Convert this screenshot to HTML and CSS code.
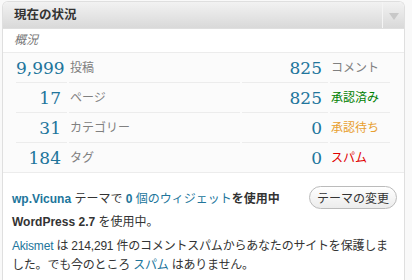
FILE: index.html
```html
<!DOCTYPE html>
<html lang="ja">
<head>
    <meta charset="UTF-8">
    <title>現在の状況</title>
    <link rel="stylesheet" href="styles.css">
</head>
<body>
    <div class="postbox">
        <div class="handle">
            <h3>現在の状況</h3>
            <div class="toggle"><span class="arrow"></span></div>
        </div>
        <p class="sub">概況</p>
        <div class="table">
            <div class="num first">9,999</div>
            <div class="label first">投稿</div>
            <div class="num first">825</div>
            <div class="label first">コメント</div>

            <div class="num">17</div>
            <div class="label">ページ</div>
            <div class="num">825</div>
            <div class="label approved">承認済み</div>

            <div class="num">31</div>
            <div class="label">カテゴリー</div>
            <div class="num">0</div>
            <div class="label waiting">承認待ち</div>

            <div class="num last">184</div>
            <div class="label last">タグ</div>
            <div class="num last">0</div>
            <div class="label last spam">スパム</div>
        </div>
        <div class="versions">
            <div class="theme-row">
                <p><a class="b" href="#">wp.Vicuna</a> テーマで <a class="b" href="#">0</a> <a href="#">個のウィジェット</a><span class="b">を使用中</span></p>
                <button class="button">テーマの変更</button>
            </div>
            <p class="wpver"><span class="b">WordPress 2.7</span> を使用中。</p>
            <p class="akismet"><a href="#">Akismet</a> は 214,291 件のコメントスパムからあなたのサイトを保護しました。でも今のところ <a href="#">スパム</a> はありません。</p>
            <div class="foot"></div>
        </div>
    </div>
</body>
</html>
```

FILE: styles.css
```css
body {
    margin: 0;
    padding: 0;
    background-color: #f9f9f9;
    font-family: "Liberation Sans", "Noto Sans CJK JP", sans-serif;
    font-size: 12px;
    color: #333;
}

a {
    color: #21759b;
    text-decoration: none;
}

.b {
    font-weight: bold;
}

.postbox {
    margin: 1px 0 0 2px;
    width: 401px;
    height: 290px;
    background-color: #fff;
    border: 1px solid #dfdfdf;
    border-bottom: none;
    border-radius: 6px 6px 0 0;
    overflow: hidden;
}

.handle {
    display: flex;
    height: 26px;
    background: linear-gradient(#f2f2f2, #d9d9d9);
    border-bottom: 1px solid #dfdfdf;
}

.handle h3 {
    flex: 1;
    margin: 0;
    padding-left: 11px;
    font-size: 12.5px;
    line-height: 26px;
    color: #333;
}

.toggle {
    width: 22px;
    border-left: 1px solid #f4f4f4;
    display: flex;
    justify-content: center;
    padding-top: 11px;
    box-sizing: border-box;
}

.arrow {
    width: 0;
    height: 0;
    border-left: 5px solid transparent;
    border-right: 5px solid transparent;
    border-top: 7px solid #c8c8c8;
}

.sub {
    margin: 0;
    padding-left: 11px;
    height: 23px;
    line-height: 22px;
    font-style: italic;
    color: #777;
    border-bottom: 1px solid #ececec;
}

.table {
    display: grid;
    grid-template-columns: 51px 171px 86px 60px;
    column-gap: 2px;
    padding: 0 0 0 13px;
    background-color: #fbfbfb;
    border-bottom: 1px solid #ececec;
}

.table > div {
    height: 29px;
    line-height: 30px;
    border-bottom: 1px solid #ececec;
}

.table > .last {
    border-bottom: none;
}

.num {
    text-align: right;
    padding-right: 6px;
    font-family: "DejaVu Serif", "Liberation Serif", serif;
    font-size: 17px;
    color: #21759b;
}

.label {
    padding-left: 1px;
    color: #808080;
}

.approved {
    color: #008000;
}

.waiting {
    color: #e8a030;
}

.spam {
    color: #e00000;
}

.versions {
    padding: 12px 7px 0 9px;
}

.versions p {
    margin: 0;
}

.theme-row {
    display: flex;
    justify-content: space-between;
    align-items: center;
    height: 24px;
}

.button {
    font-family: "Liberation Sans", "Noto Sans CJK JP", sans-serif;
    font-size: 12px;
    color: #333;
    height: 23px;
    padding: 0 7px;
    border: 1px solid #bbb;
    border-radius: 12px;
    background: linear-gradient(#fff, #ececec);
}

.versions .wpver {
    margin-top: 4px;
    line-height: 18px;
}

.versions .akismet {
    margin-top: 6px;
    line-height: 19px;
    letter-spacing: -0.2px;
}

.foot {
    margin: 10px 0 0 5px;
    border-top: 1px solid #e6e6e6;
}
```
